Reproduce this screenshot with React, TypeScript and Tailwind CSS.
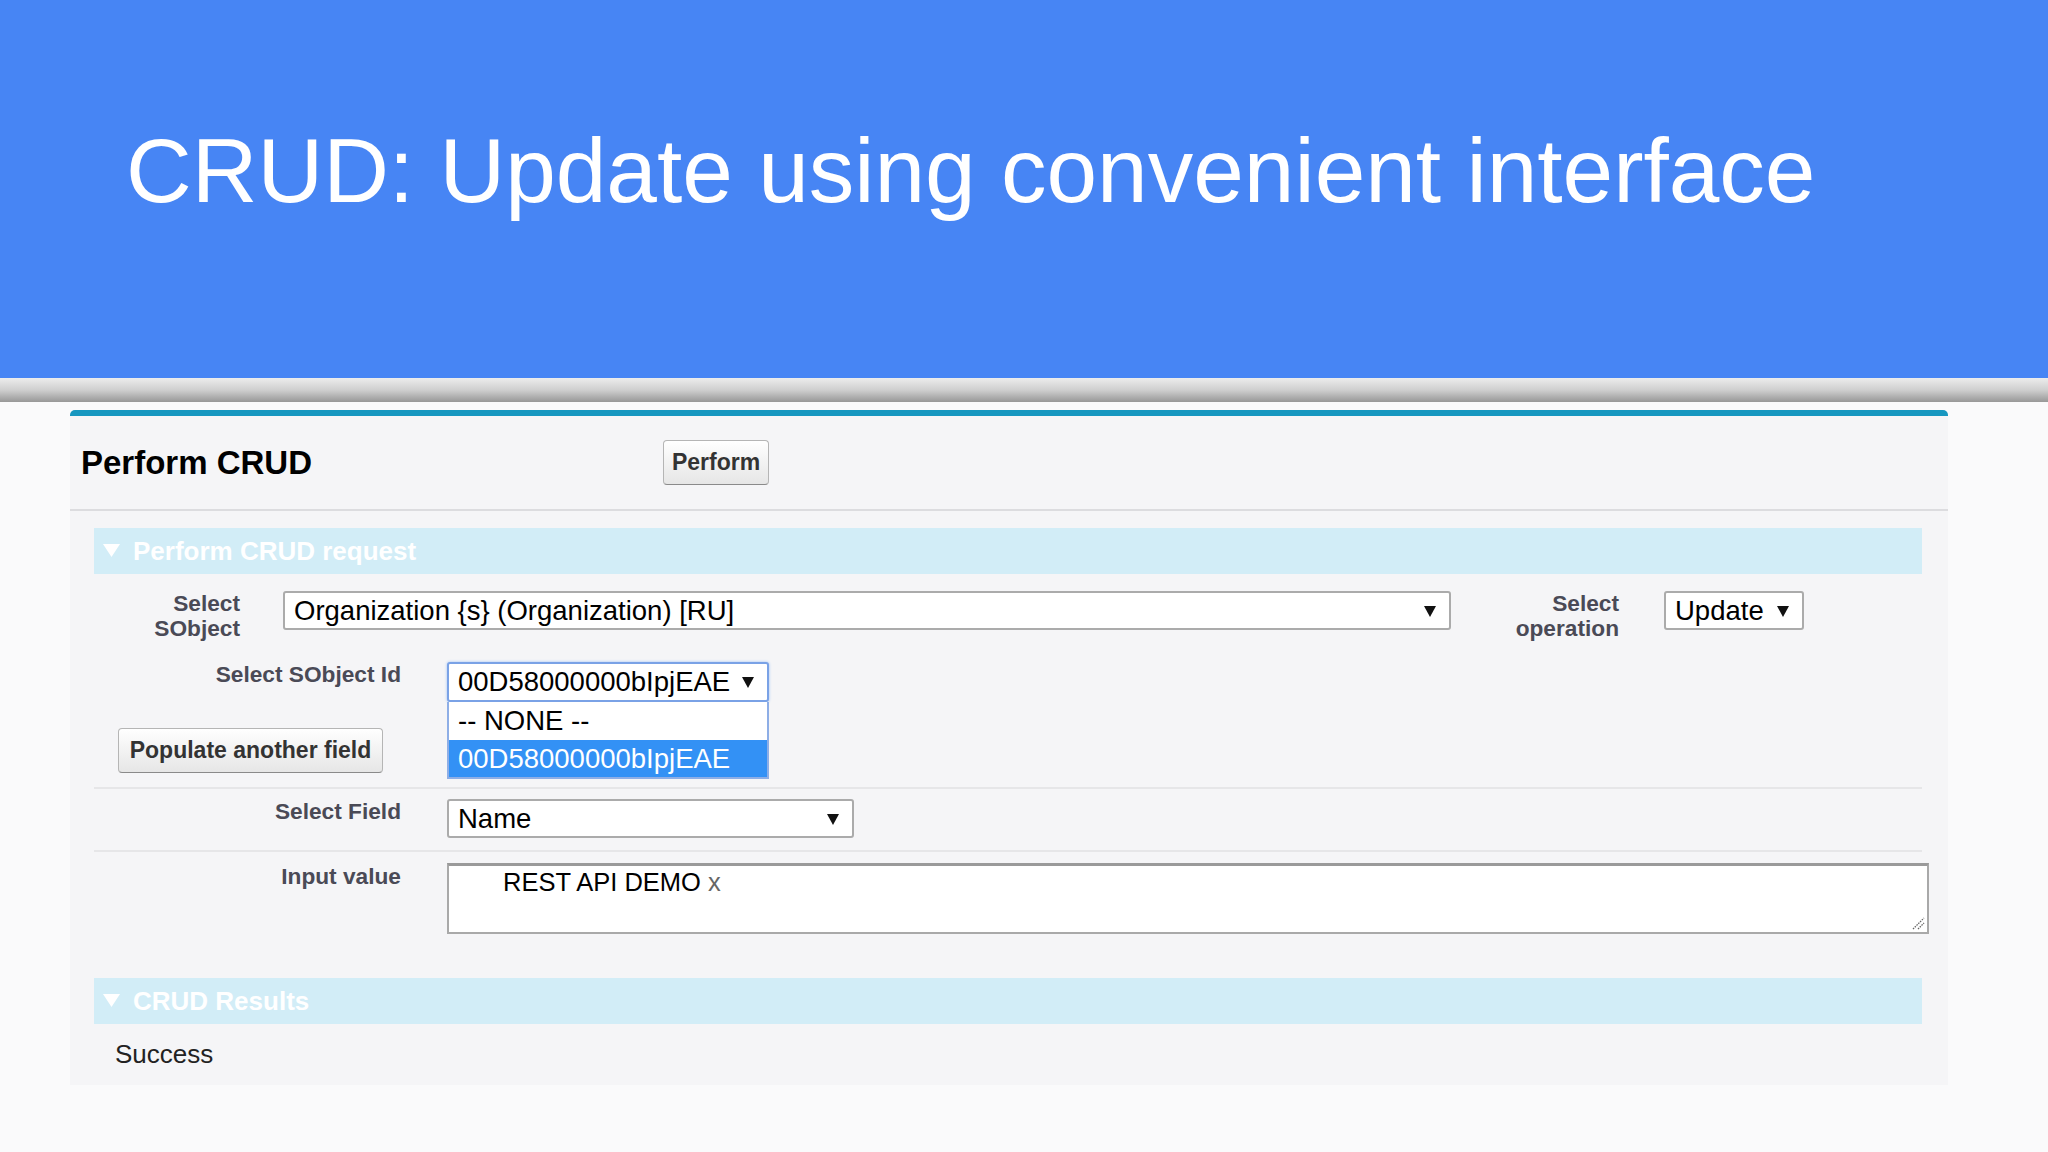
import React from 'react';

const Arrow: React.FC<{ className?: string }> = ({ className = '' }) => (
  <svg className={className} width="12" height="12" viewBox="0 0 12 12">
    <polygon points="0,1 12,1 6,12" fill="#111" />
  </svg>
);

const SelectBox: React.FC<{ value: string; className: string }> = ({ value, className }) => (
  <div className={`flex shrink-0 items-center justify-between bg-white rounded-[3px] pl-[9px] pr-[13px] text-[27.5px] text-black ${className}`}>
    <span className="leading-none whitespace-nowrap">{value}</span>
    <Arrow />
  </div>
);

const SectionHeader: React.FC<{ title: string }> = ({ title }) => (
  <div className="flex items-center w-[1828px] h-[46px] bg-[#d2edf7] pl-[9px]">
    <svg width="17" height="13" viewBox="0 0 17 13" className="mt-[-1px]">
      <polygon points="0,0 17,0 8.5,13" fill="#ffffff" />
    </svg>
    <span className="ml-[13px] text-[26px] font-bold text-white leading-none">{title}</span>
  </div>
);

const Label: React.FC<{ children: React.ReactNode; className?: string }> = ({ children, className = '' }) => (
  <div className={`shrink-0 text-right text-[22.7px] font-bold leading-[25px] text-[#4a4a56] ${className}`}>{children}</div>
);

const App: React.FC = () => {
  return (
    <div className="w-full h-[1152px] overflow-hidden bg-[#fafafb] font-['Liberation_Sans',Arial,sans-serif]">
      {/* slide title */}
      <header className="h-[378px] bg-[#4785f4] pl-[126px] pt-[125px]">
        <h1 className="text-[91px] leading-none text-white whitespace-nowrap">CRUD: Update using convenient interface</h1>
      </header>
      <div className="h-[24px] bg-linear-to-b from-[#ededed] via-[#cfcfcf] to-[#989898]" />

      {/* page block */}
      <section className="ml-[70px] mt-[8px] w-[1878px] bg-[#f5f5f7] border-t-[6px] border-[#1797c0] rounded-t-[5px] pb-[16px]">
        <div className="flex items-center h-[95px] pl-[11px] border-b-2 border-[#dcdcdf]">
          <h2 className="w-[582px] text-[33px] font-bold text-black leading-none">Perform CRUD</h2>
          <button className="w-[106px] h-[45px] rounded-[4px] border border-[#b5b5b5] border-b-[#8a8a8a] bg-linear-to-b from-[#ffffff] to-[#e6e6e6] text-[23px] font-bold text-[#333]">
            Perform
          </button>
        </div>

        <div className="pl-[24px] pt-[17px]">
          <SectionHeader title="Perform CRUD request" />

          {/* row 1 */}
          <div className="flex items-start w-[1828px] h-[75px] pt-[17px]">
            <Label className="w-[146px]">
              Select
              <br />
              SObject
            </Label>
            <SelectBox value="Organization {s} (Organization) [RU]" className="ml-[43px] w-[1168px] h-[39px] border-2 border-[#ababab]" />
            <Label className="w-[168px]">
              Select
              <br />
              operation
            </Label>
            <SelectBox value="Update" className="ml-[45px] w-[140px] h-[39px] border-2 border-[#ababab]" />
          </div>

          {/* row 2 */}
          <div className="flex items-start w-[1828px] pt-[13px] pb-[14px] border-b-2 border-[#e6e6e8]">
            <div className="w-[307px] shrink-0">
              <Label>Select SObject Id</Label>
              <button className="mt-[41px] ml-[24px] w-[265px] h-[45px] rounded-[4px] border border-[#b5b5b5] border-b-[#8a8a8a] bg-linear-to-b from-[#ffffff] to-[#e6e6e6] text-[23px] font-bold text-[#333] whitespace-nowrap">
                Populate another field
              </button>
            </div>
            <div className="relative shrink-0 ml-[46px] w-[322px]">
              <SelectBox value="00D58000000bIpjEAE" className="w-[322px] h-[40px] border-2 border-[#7aa2e6] shadow-[0_0_3px_#9cc0f5]" />
              <div className="absolute left-0 top-full w-[322px] bg-white border-2 border-t-0 border-[#8eaee6] text-[27.5px] leading-none">
                <div className="h-[38px] flex items-center pl-[9px] text-black">-- NONE --</div>
                <div className="h-[37px] flex items-center pl-[9px] bg-[#3391f5] text-white">00D58000000bIpjEAE</div>
              </div>
            </div>
          </div>

          {/* row 3 */}
          <div className="flex items-start w-[1828px] pt-[10px] pb-[12px] border-b-2 border-[#e6e6e8]">
            <Label className="w-[307px]">Select Field</Label>
            <SelectBox value="Name" className="ml-[46px] w-[407px] h-[39px] border-2 border-[#ababab]" />
          </div>

          {/* row 4 */}
          <div className="flex items-start w-[1828px] pt-[11px]">
            <Label className="w-[307px] mt-[1px]">Input value</Label>
            <div className="relative shrink-0 ml-[46px] w-[1482px] h-[71px] bg-white border-2 border-[#a9a9a9] border-t-[3px] border-t-[#9a9a9a] pl-[54px] pt-[2px]">
              <span className="text-[25.5px] leading-[29px] text-black whitespace-nowrap">
                REST API DEMO <span className="text-[#666]">x</span>
              </span>
              <svg className="absolute right-[2px] bottom-[2px]" width="14" height="14" viewBox="0 0 14 14">
                <line x1="2" y1="13" x2="13" y2="2" stroke="#666" strokeWidth="1.3" strokeDasharray="1.5 1" />
                <line x1="7" y1="13" x2="13" y2="7" stroke="#666" strokeWidth="1.3" strokeDasharray="1.5 1" />
              </svg>
            </div>
          </div>

          <div className="mt-[44px]">
            <SectionHeader title="CRUD Results" />
          </div>
          <p className="mt-[16px] pl-[21px] text-[26px] leading-[29px] text-[#222]">Success</p>
        </div>
      </section>
    </div>
  );
};

export default App;
